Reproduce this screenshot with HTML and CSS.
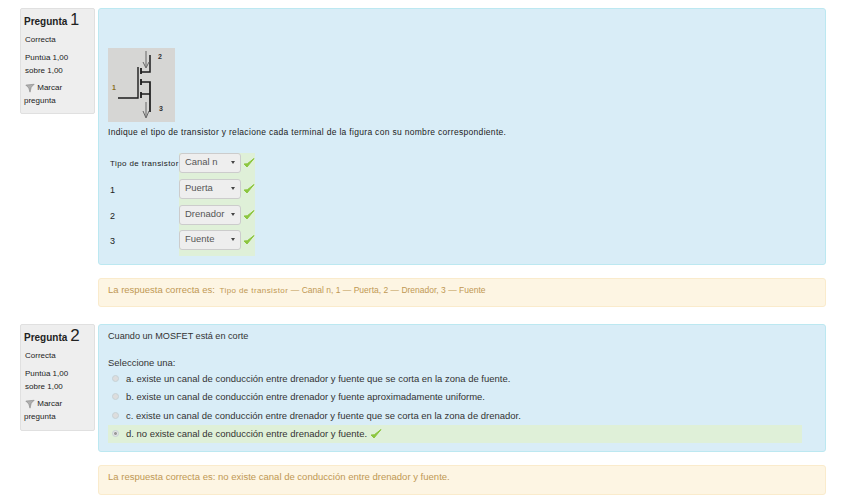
FILE: index.html
```html
<!DOCTYPE html>
<html lang="es">
<head>
<meta charset="utf-8">
<title>Preguntas</title>
<link rel="stylesheet" href="styles.css">
</head>
<body>
<main class="page">
  <section class="que q1">
    <aside class="info">
      <h3 class="qno">Pregunta <span class="num">1</span></h3>
      <div class="state">Correcta</div>
      <div class="grade">Puntúa 1,00<br>sobre 1,00</div>
      <div class="flag"><svg class="flagicon" viewBox="0 0 12 12" width="10" height="10"><path d="M1 2.5 11 1.5 7.5 5 6 11 4.5 6Z" fill="#b0b0b0" stroke="#777" stroke-width=".6"/></svg> Marcar<br>pregunta</div>
    </aside>
    <div class="main">
      <div class="formulation f1">
        <svg class="pic" viewBox="0 0 67 74" width="67" height="74">
          <rect width="67" height="74" fill="#d6d6d4"/>
          <g fill="none" stroke="#1c1c1c">
            <path d="M10 50H30V19" stroke-width="1.4"/>
            <path d="M33 20V26M33 31V37M33 44V50" stroke-width="1.8"/>
            <path d="M33 24H42V7" stroke-width="1.5"/>
            <path d="M33 34H42V64M33 46H42" stroke-width="1.7"/>
          </g>
          <path d="M38 3V19M35 14 38 20 41 14M38 54V69M35 63 38 70 41 63" fill="none" stroke="#666" stroke-width="1"/>
          <text class="pictext" x="50" y="11">2</text>
          <text class="pictext one" x="4" y="42">1</text>
          <text class="pictext" x="51" y="63">3</text>
        </svg>
        <p class="qtext">Indique el tipo de transistor y relacione cada terminal de la figura con su nombre correspondiente.</p>
        <div class="match">
          <div class="row"><span class="lab spaced">Tipo de transistor</span><span class="cell"><span class="sel">Canal n</span><svg class="check" viewBox="0 0 12 12" width="12" height="12"><path d="M1 7 4 10 11 1.5 4.3 6.8Z" fill="#8cc63f" stroke="#8cc63f"/></svg></span></div>
          <div class="row"><span class="lab">1</span><span class="cell"><span class="sel">Puerta</span><svg class="check" viewBox="0 0 12 12" width="12" height="12"><path d="M1 7 4 10 11 1.5 4.3 6.8Z" fill="#8cc63f" stroke="#8cc63f"/></svg></span></div>
          <div class="row"><span class="lab">2</span><span class="cell"><span class="sel">Drenador</span><svg class="check" viewBox="0 0 12 12" width="12" height="12"><path d="M1 7 4 10 11 1.5 4.3 6.8Z" fill="#8cc63f" stroke="#8cc63f"/></svg></span></div>
          <div class="row"><span class="lab">3</span><span class="cell"><span class="sel">Fuente</span><svg class="check" viewBox="0 0 12 12" width="12" height="12"><path d="M1 7 4 10 11 1.5 4.3 6.8Z" fill="#8cc63f" stroke="#8cc63f"/></svg></span></div>
        </div>
      </div>
      <div class="feedback fb1">La respuesta correcta es: <span class="spaced small">Tipo de transistor</span> <span class="tail">— Canal n, 1 — Puerta, 2 — Drenador, 3 — Fuente</span></div>
    </div>
  </section>
  <section class="que q2">
    <aside class="info">
      <h3 class="qno">Pregunta <span class="num">2</span></h3>
      <div class="state">Correcta</div>
      <div class="grade">Puntúa 1,00<br>sobre 1,00</div>
      <div class="flag"><svg class="flagicon" viewBox="0 0 12 12" width="10" height="10"><path d="M1 2.5 11 1.5 7.5 5 6 11 4.5 6Z" fill="#b0b0b0" stroke="#777" stroke-width=".6"/></svg> Marcar<br>pregunta</div>
    </aside>
    <div class="main">
      <div class="formulation f2">
        <p class="intro">Cuando un MOSFET está en corte</p>
        <p class="prompt">Seleccione una:</p>
        <div class="opt"><span class="radio"></span>a. existe un canal de conducción entre drenador y fuente que se corta en la zona de fuente.</div>
        <div class="opt"><span class="radio"></span>b. existe un canal de conducción entre drenador y fuente aproximadamente uniforme.</div>
        <div class="opt"><span class="radio"></span>c. existe un canal de conducción entre drenador y fuente que se corta en la zona de drenador.</div>
        <div class="opt right"><span class="radio on"></span>d. no existe canal de conducción entre drenador y fuente.<svg class="check tick" viewBox="0 0 12 12" width="12" height="12"><path d="M1 7 4 10 11 1.5 4.3 6.8Z" fill="#8cc63f" stroke="#8cc63f"/></svg></div>
      </div>
      <div class="feedback fb2">La respuesta correcta es: no existe canal de conducción entre drenador y fuente.</div>
    </div>
  </section>
</main>
</body>
</html>
```

FILE: styles.css
```css
* { box-sizing: border-box; }
html, body { margin: 0; padding: 0; background: #fff; }
body {
  font-family: "Liberation Sans", Arial, sans-serif;
  font-size: 9.47px;
  line-height: 13px;
  color: #333;
  width: 848px;
  height: 501px;
  overflow: hidden;
}
.page { padding: 8px 22px 0 20px; }
.que { display: flex; align-items: flex-start; gap: 3px; }
.q2 { margin-top: 17px; }
.info {
  flex: 0 0 75px;
  background: #eee;
  border: 1px solid #e0e0e0;
  border-radius: 2px;
  padding: 3px 3px 6px;
  font-size: 8px;
  line-height: 13px;
  color: #222;
}
.q2 .info { padding-bottom: 7px; }
.qno {
  margin: 0;
  font-size: 10px;
  line-height: 16px;
  font-weight: 700;
  color: #222;
}
.num { font-size: 16px; font-weight: 400; }
.q2 .num { font-size: 17px; }
.state { margin-top: 3px; padding-left: 1px; }
.grade { margin-top: 5px; padding-left: 1px; }
.flag { margin-top: 4px; }
.flagicon { vertical-align: -3px; margin-left: 1px; }
.main { flex: 1; min-width: 0; }
.formulation {
  background: #d9edf7;
  border: 1px solid #bce8f1;
  border-radius: 3px;
  padding: 0 9px;
}
.f1 { height: 257px; padding-top: 39px; }
.f2 { height: 128px; padding-top: 5px; }
.pic { display: block; }
.pictext { font-size: 7px; font-weight: 700; fill: #333; }
.one { fill: #8a6d20; }
.qtext { margin: 4px 0 0; font-size: 8.5px; letter-spacing: .31px; color: #222; }
.match { margin-top: 14px; }
.row { display: flex; align-items: stretch; height: 25.75px; }
.lab { flex: 0 0 71px; padding: 1px 0 0 2px; line-height: 20px; font-size: 9px; color: #222; }
.row .spaced { font-size: 8px; letter-spacing: .4px; white-space: nowrap; }
.cell {
  display: flex;
  align-items: flex-start;
  gap: 2px;
  width: 76px;
  background: #dff0d8;
}
.sel {
  position: relative;
  display: block;
  flex: none;
  width: 62px;
  height: 20px;
  padding-left: 5px;
  font-size: 9.45px;
  line-height: 16px;
  color: #555;
  background: #eee;
  border: 1px solid #ccc;
  border-radius: 3px;
}
.sel::after {
  content: "";
  position: absolute;
  right: 5px;
  top: 7px;
  border: 2px solid transparent;
  border-top: 3px solid #444;
}
.check { flex: none; margin-top: 4px; }
.feedback {
  margin-top: 13px;
  padding: 0 9px;
  background: #fdf5e3;
  border: 1px solid #faebcc;
  border-radius: 3px;
  color: #c09853;
  line-height: 21px;
}
.fb1 { height: 29px; }
.fb2 { height: 30px; font-size: 9.53px; }
.small { font-size: 8px; letter-spacing: .4px; margin-left: 2px; }
.tail { font-size: 8.5px; }
.intro { margin: 0; font-size: 9.15px; }
.prompt { margin: 13px 0 0; }
.opt {
  display: flex;
  align-items: center;
  height: 18.5px;
  padding-left: 4px;
  color: #333;
}
.radio {
  flex: none;
  width: 7px;
  height: 7px;
  margin-right: 7px;
  border-radius: 50%;
  background: #ddd;
  border: 1px solid #c6d2d6;
}
.radio.on { background: radial-gradient(circle, #999 0 35%, #e4e4e4 45%); }
.right { background: #dff0d8; width: 694px; }
.tick { margin: 0 0 0 3px; }
```
